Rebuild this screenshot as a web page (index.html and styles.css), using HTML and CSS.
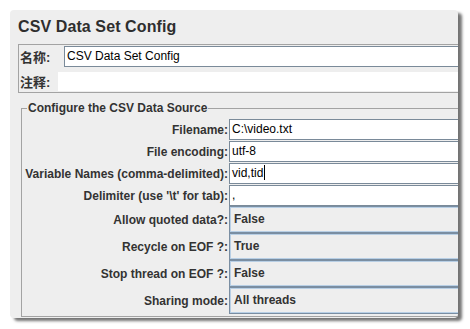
FILE: index.html
```html
<!DOCTYPE html>
<html>
<head>
<meta charset="utf-8">
<link rel="stylesheet" href="styles.css">
</head>
<body>
<div class="panel">
  <div class="title">CSV Data Set Config</div>
  <div class="namebox">
    <div class="namerow">
      <span class="nlabel n1">名称:</span>
      <div class="tfield">CSV Data Set Config</div>
    </div>
    <div class="namerow second">
      <span class="nlabel n2">注释:</span>
      <div class="tfield plain"></div>
    </div>
  </div>
  <fieldset class="group">
    <legend>Configure the CSV Data Source</legend>
    <div class="grid">
      <label class="lbl">Filename:</label>
      <div class="tfield text">C:\video.txt</div>
      <label class="lbl">File encoding:</label>
      <div class="tfield text">utf-8</div>
      <label class="lbl">Variable Names (comma-delimited):</label>
      <div class="tfield text">vid,tid<span class="caret"></span></div>
      <label class="lbl">Delimiter (use '\t' for tab):</label>
      <div class="tfield text last">,</div>
      <label class="lbl combo-l">Allow quoted data?:</label>
      <div class="combo">False</div>
      <label class="lbl combo-l">Recycle on EOF ?:</label>
      <div class="combo">True</div>
      <label class="lbl combo-l">Stop thread on EOF ?:</label>
      <div class="combo">False</div>
      <label class="lbl combo-l">Sharing mode:</label>
      <div class="combo">All threads</div>
    </div>
  </fieldset>
</div>
</body>
</html>
```

FILE: styles.css
```css
html, body {
  margin: 0;
  padding: 0;
  background: #ffffff;
}
body {
  padding: 10px;
  font-family: "Liberation Sans", Arial, "Noto Sans CJK SC", sans-serif;
  font-size: 12px;
  color: #333333;
}
.panel {
  width: 448px;
  height: 308px;
  box-sizing: border-box;
  background: #eeeeee;
  border-radius: 4px;
  box-shadow: 4px 3px 3px rgba(0, 0, 0, 0.55);
  padding: 7px 0 0 8px;
  overflow: hidden;
}
.title {
  font-size: 16px;
  font-weight: bold;
  line-height: 20px;
  margin-bottom: 7px;
  color: #2e2e2e;
  letter-spacing: 0.1px;
}
.namebox {
  border: 1px solid #a3a3a3;
  margin-right: -10px;
  height: 46px;
  padding-top: 1px;
}
.namerow {
  display: flex;
  align-items: center;
  height: 21px;
}
.namerow.second {
  margin-top: 5px;
  height: 19px;
}
.nlabel {
  font-weight: bold;
  font-size: 13px;
  padding-left: 1px;
  flex: none;
  font-family: "Liberation Sans", "Noto Sans CJK SC", sans-serif;
}
.n1 { width: 44px; }
.n2 { width: 38px; }
.tfield {
  flex: 1;
  height: 21px;
  box-sizing: border-box;
  border: 1px solid #7a8a99;
  background: #ffffff;
  color: #000000;
  padding-left: 2px;
  line-height: 19px;
  font-size: 12px;
  white-space: nowrap;
}
.tfield.plain {
  border: none;
  height: 19px;
}
.group {
  margin: 8px -20px 0 3px;
  padding: 4px 0 2px 0;
  border: 1px solid #a3a3a3;
}
.group legend {
  font-weight: bold;
  font-size: 12px;
  line-height: 14px;
  margin-left: 5px;
  padding: 0 1px;
  color: #333333;
}
.grid {
  display: grid;
  grid-template-columns: 207px 1fr;
  align-items: center;
}
.lbl {
  font-weight: bold;
  text-align: right;
  padding-right: 1px;
  white-space: nowrap;
}
.tfield.text {
  margin-bottom: 1px;
}
.tfield.last {
  margin-bottom: 0;
}
.caret {
  display: inline-block;
  width: 1px;
  height: 15px;
  background: #000000;
  vertical-align: -3px;
  margin-left: 1px;
}
.combo {
  height: 27px;
  box-sizing: border-box;
  border: 1px solid #7a8ea2;
  box-shadow: inset 0 0 0 1px #b8cfe5;
  background: #eeeeee;
  font-weight: bold;
  padding-left: 4px;
  line-height: 25px;
  color: #333333;
}
```
